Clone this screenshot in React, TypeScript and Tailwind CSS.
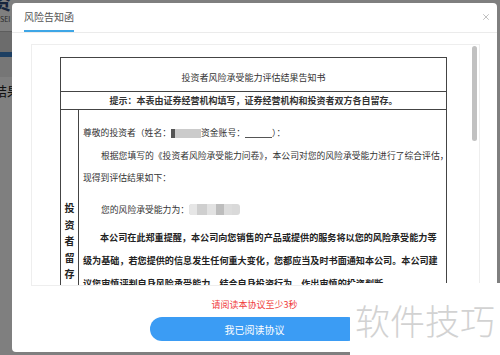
import { X } from "lucide-react";

const cjk = "font-['Noto_Sans_CJK_SC','Noto_Sans',sans-serif]";

function Blur({ w }: { w: number }) {
  return (
    <span
      className="inline-flex h-[11px] items-center overflow-hidden rounded-[3px] bg-[#d9d9d9] align-middle blur-[0.6px]"
      style={{ width: w }}
    >
      <span className="h-full w-[8px] bg-[#e6e6e6]" />
      <span className="h-full w-[10px] bg-[#cfcfcf]" />
      <span className="h-full w-[9px] bg-[#e2e2e2]" />
      <span className="h-full w-[8px] bg-[#bdbdbd]" />
      <span className="h-full w-[8px] bg-[#dcdcdc]" />
    </span>
  );
}

function UnderlyingPage() {
  return (
    <div className="flex w-[60px] flex-col">
      <div className="h-[12px] overflow-hidden">
        <span className="-ml-[9px] -mt-[8px] block text-[20px] font-bold leading-none text-[#2c4a7a]">资</span>
      </div>
      <div className="h-[14px] pt-[3px] text-[7px] leading-[9px] text-[#555]">SEI</div>
      <div className="h-[6px] border-b border-[#bbb]" />
      <div className="h-[20px] bg-[#d8d8d8]" />
      <div className="h-[5px] bg-[#3a7ec4]" />
      <div className="h-[20px] bg-[#ececec]" />
      <div className="-ml-[6px] pt-[6px] text-[13px] leading-[16px] text-[#222]">结果</div>
    </div>
  );
}

export default function App() {
  return (
    <div className={`relative h-[355px] w-[500px] overflow-hidden bg-white ${cjk}`}>
      <UnderlyingPage />
      <div className="absolute inset-0 bg-black/50" />

      <div className="absolute left-[12px] top-[3px] flex h-[349px] w-[485px] flex-col rounded-[4px] bg-white">
        <div className="flex h-[30px] shrink-0 items-end justify-between border-b border-[#ebebeb] pl-[12px] pr-[6px]">
          <div className="flex h-[29px] items-center border-b-2 border-[#3ea6e6] text-[10px] text-[#555]">
            风险告知函
          </div>
          <X className="mb-[10px] h-[10px] w-[10px] text-[#9a9a9a]" strokeWidth={1.5} />
        </div>

        <div className="ml-[19px] mt-[11px] flex h-[242px] w-[449px] shrink-0 border border-[#eeeeee]">
          <div className="flex-1 overflow-hidden pl-[28px] pt-[12px]">
            <div className="w-[387px] border-x border-t border-[#444] text-[#333]">
              <div className="flex h-[34px] items-end justify-center border-b border-[#444] pb-[7px] text-[9px] leading-[12px]">
                投资者风险承受能力评估结果告知书
              </div>
              <div className="flex h-[18px] items-center justify-center border-b border-[#444] text-[9px] font-bold leading-[12px]">
                提示：本表由证券经营机构填写，证券经营机构和投资者双方各自留存。
              </div>
              <div className="flex h-[300px]">
                <div className="flex w-[18px] shrink-0 flex-col items-center border-r border-[#444] pt-[90px] text-[10px] font-bold leading-[16.5px] text-[#222]">
                  <span>投</span>
                  <span>资</span>
                  <span>者</span>
                  <span>留</span>
                  <span>存</span>
                </div>
                <div className="flex-1 whitespace-nowrap pl-[4px] pt-[12px] text-[8.8px]">
                  <p className="flex h-[22.5px] items-center leading-[22.5px]">
                    尊敬的投资者（姓名：
                    <span className="inline-flex h-[9px] items-center blur-[0.6px]">
                      <span className="h-full w-[4px] bg-[#555]" />
                      <span className="h-full w-[26px] bg-[#cbcbcb]" />
                    </span>
                    资金账号：
                    <span className="inline-block h-[9px] w-[27px] border-b border-[#555]" />
                    ）：
                  </p>
                  <p className="leading-[22.5px]">
                    <span className="block pl-[18px]">根据您填写的《投资者风险承受能力问卷》，本公司对您的风险承受能力进行了综合评估，</span>
                    <span className="block">现得到评估结果如下：</span>
                  </p>
                  <p className="mt-[9px] flex h-[22.5px] items-center pl-[18px] leading-[22.5px]">
                    您的风险承受能力为：
                    <Blur w={51} />
                  </p>
                  <div className="mt-[5px] text-[9.1px] font-bold leading-[23px] text-[#222]">
                    <span className="block pl-[17px]">本公司在此郑重提醒，本公司向您销售的产品或提供的服务将以您的风险承受能力等</span>
                    <span className="block">级为基础，若您提供的信息发生任何重大变化，您都应当及时书面通知本公司。本公司建</span>
                    <span className="block">议您审慎评判自身风险承受能力、结合自身投资行为，作出审慎的投资判断。</span>
                  </div>
                </div>
              </div>
            </div>
          </div>
          <div className="w-[7px] shrink-0 pt-[1px]">
            <div className="h-[95px] w-[5px] rounded-[3px] bg-[#c1c1c1]" />
          </div>
        </div>

        <div className="flex flex-col items-center">
          <p className="mt-[13px] text-[9px] leading-[12px] text-[#f03c3c]">请阅读本协议至少3秒</p>
          <button className="mt-[6px] flex h-[24px] w-[210px] items-center justify-center rounded-full bg-[#3b9cf4] text-[10px] text-white">
            我已阅读协议
          </button>
        </div>
      </div>

      <div className="absolute bottom-0 left-[350px] right-0 top-[283px] flex items-center bg-white pl-[5px]">
        <span className="text-[35px] font-light leading-none text-[#d2d2d2]">软件技巧</span>
      </div>
    </div>
  );
}
